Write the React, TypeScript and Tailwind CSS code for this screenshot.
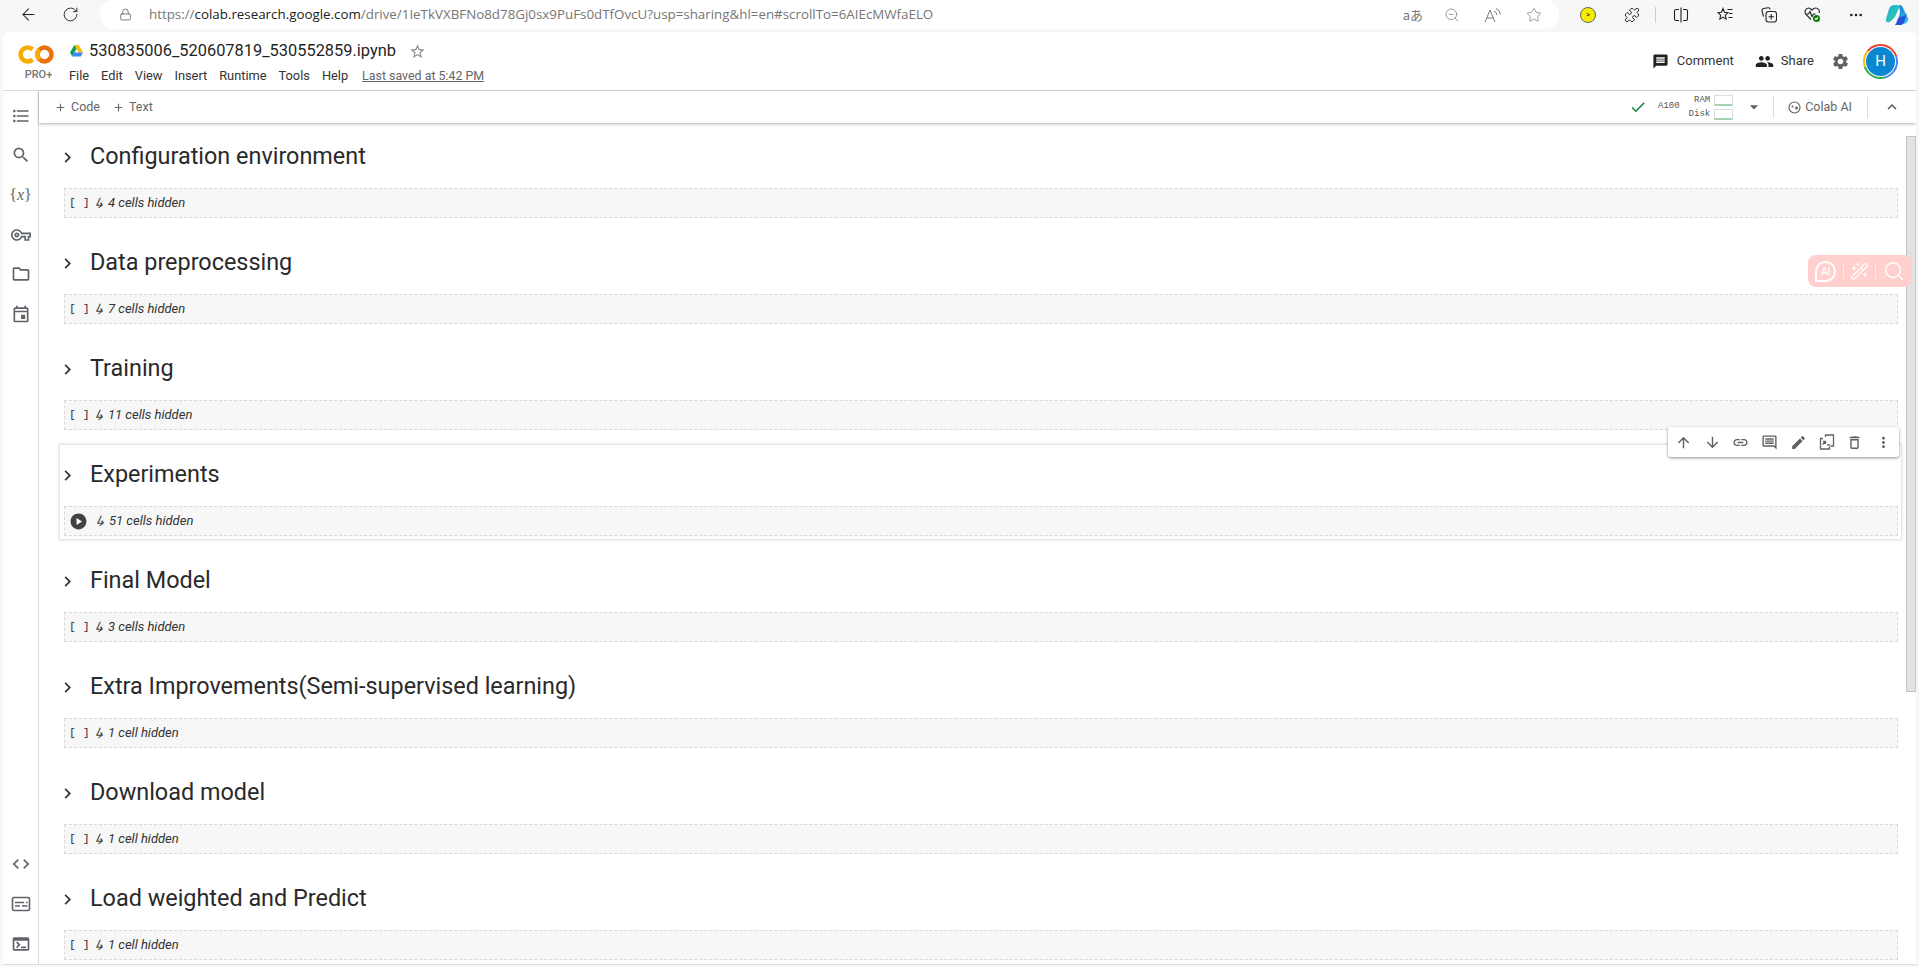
import React from 'react'
import {
  MdAdd, MdArrowDownward, MdArrowDropDown, MdArrowUpward, MdCheck, MdChevronRight, MdCode,
  MdEdit, MdExpandLess, MdFormatListBulleted, MdLink, MdMessage, MdMoreVert, MdOutlineComment, MdOutlineDelete,
  MdOutlineEvent, MdOutlineFolder, MdOutlineVpnKey, MdPeople, MdPlayCircle,
  MdSearch, MdSettings, MdStarBorder, MdOutlineTerminal,
} from 'react-icons/md'
import { ArrowLeft, Lock, Puzzle, RotateCw, Star, ZoomOut, MoreHorizontal, WandSparkles, Search } from 'lucide-react'

const sections = [
  { title: 'Configuration environment', hidden: '4 cells hidden' },
  { title: 'Data preprocessing', hidden: '7 cells hidden' },
  { title: 'Training', hidden: '11 cells hidden' },
  { title: 'Experiments', hidden: '51 cells hidden', active: true },
  { title: 'Final Model', hidden: '3 cells hidden' },
  { title: 'Extra Improvements(Semi-supervised learning)', hidden: '1 cell hidden' },
  { title: 'Download model', hidden: '1 cell hidden' },
  { title: 'Load weighted and Predict', hidden: '1 cell hidden' },
]

function BrowserBar() {
  return (
    <div className="h-[32px] flex bg-[#f7f7f7] shrink-0 text-[#222]">
      <div className="w-[100px] h-[29px] flex items-center pl-[19px] gap-[24px]">
        <ArrowLeft size={19} strokeWidth={1.3} />
        <RotateCw size={17} strokeWidth={1.3} />
      </div>
      <div className="w-[1459px] h-[29px] bg-white rounded-[14px] flex items-center pl-[19px]">
        <Lock size={13} strokeWidth={1.4} className="text-[#555]" />
        <div className="ml-[17px] text-[13.35px] whitespace-nowrap text-[#767676] font-['Open_Sans',sans-serif]">
          https://<span className="text-[#222]">colab.research.google.com</span>/drive/1IeTkVXBFNo8d78Gj0sx9PuFs0dTfOvcU?usp=sharing&hl=en#scrollTo=6AIEcMWfaELO
        </div>
        <div className="ml-auto flex items-center text-[#777]">
          <span className="text-[13px] font-['Noto_Sans_CJK_JP',sans-serif]">aあ</span>
          <ZoomOut size={16} strokeWidth={1.1} className="ml-[21px]" />
          <svg width="18" height="16" viewBox="0 0 18 16" fill="none" stroke="#777" strokeWidth="1" className="ml-[24px]">
            <path d="M1 15 L6 3 L11 15 M3 11 H9" />
            <path d="M10 4 Q12.5 5 13 8 M12 1.5 Q16 3 16.5 7.5" />
          </svg>
          <Star size={16} strokeWidth={1.1} className="ml-[24px] mr-[17px]" />
        </div>
      </div>
      <div className="flex items-center h-[29px]">
        <div className="ml-[21px] w-[16px] h-[16px] rounded-full bg-[#f5ee00] border border-[#666] flex items-center justify-center text-[8px] leading-none">&gt;</div>
        <Puzzle size={16} strokeWidth={1.4} className="ml-[28px]" />
        <div className="ml-[15px] w-px h-[16px] bg-[#ccc]" />
        <svg width="16" height="16" viewBox="0 0 16 16" fill="none" stroke="#222" strokeWidth="1.1" className="ml-[17px]">
          <path d="M6 2.5H3a1.5 1.5 0 0 0-1.5 1.5v8A1.5 1.5 0 0 0 3 13.5H6M10 2.5h3A1.5 1.5 0 0 1 14.5 4v8a1.5 1.5 0 0 1-1.5 1.5h-3M8 .5v15" />
        </svg>
        <svg width="16" height="16" viewBox="0 0 16 16" fill="none" stroke="#222" strokeWidth="1.1" className="ml-[28px]">
          <path d="M6 1.5l1.5 3.8 3.5.3-2.6 2.5.7 4-3.1-2-3.1 2 .7-4L1 5.6l3.5-.3z" />
          <path d="M10.5 2.5h5M12 6.5h3.5M11.5 10.5h4" />
        </svg>
        <svg width="16" height="16" viewBox="0 0 16 16" fill="none" stroke="#222" strokeWidth="1.1" className="ml-[28px]">
          <path d="M2.5 9.5L1 4a2 2 0 0 1 1.5-2.5L7 .8a2 2 0 0 1 2.2 1.7" />
          <rect x="5" y="4.5" width="10.5" height="10.5" rx="2.5" />
          <path d="M10.2 7v5.5M7.5 9.8h5.5" />
        </svg>
        <svg width="17" height="17" viewBox="0 0 17 17" fill="none" stroke="#222" strokeWidth="1.1" className="ml-[27px]">
          <path d="M7 13.5L2 8.5C0 6 1.5 2 4.5 2 6 2 7 3 8 4c1-1 2-2 3.5-2C14.5 2 16 5 15 7" />
          <path d="M1.5 8h3l1.5-2.5 2 5 1.5-2.5h2" />
          <circle cx="12.5" cy="12.5" r="3.5" fill="#107c10" stroke="none" />
          <path d="M11 12.5l1 1 2-2" stroke="#fff" />
        </svg>
        <MoreHorizontal size={16} strokeWidth={2} className="ml-[27px]" />
        <svg width="24" height="22" viewBox="0 0 24 22" className="ml-[21px]">
          <defs>
            <linearGradient id="cpa" x1="0" y1="0" x2="1" y2="1"><stop offset="0" stopColor="#1fa8e0" /><stop offset="1" stopColor="#33d39a" /></linearGradient>
            <linearGradient id="cpb" x1="0" y1="0" x2="1" y2="1"><stop offset="0" stopColor="#0e6fd8" /><stop offset="1" stopColor="#3cc8e8" /></linearGradient>
          </defs>
          <path d="M10 1 C6 1 4.5 3 3.5 7 L1 15 C0 19 4 19 6 17 L10 13 L14 4 C15 1 13 1 10 1Z" fill="url(#cpa)" />
          <path d="M14 1 C17 1 18 3 19 6 L23 14 C24 18 20 20 18 20 L10 21 C13 19 13 17 14 13 L15 8Z" fill="url(#cpb)" />
          <path d="M10 21 L15 21 C18 21 19 19 20 15 L22 9 C21 12 16 13 14 13 C12 15 12 19 10 21Z" fill="#2a52d8" />
        </svg>
      </div>
    </div>
  )
}

function ColabLogo() {
  return (
    <div className="w-[36px] ml-[15px] flex flex-col items-center shrink-0">
      <svg width="36" height="19" viewBox="0 0 36 19">
        <circle cx="26.5" cy="9.5" r="7" fill="none" stroke="#e8710a" strokeWidth="4.6" />
        <path d="M14.5 4.5 A7 7 0 1 0 14.5 14.5" fill="none" stroke="#f9ab00" strokeWidth="4.6" />
        <path d="M21.5 4.5 A7 7 0 0 0 21.5 14.5" fill="none" stroke="#f9ab00" strokeWidth="4.6" />
      </svg>
      <div className="text-[11px] leading-none mt-[5px] ml-[5px] text-[#757575] font-medium whitespace-nowrap">PRO+</div>
    </div>
  )
}

function DriveIcon() {
  return (
    <svg width="13" height="12" viewBox="0 0 13 12" className="shrink-0">
      <path d="M4.3 0h4.4l4.3 7.5H8.7z" fill="#fbbc04" />
      <path d="M4.3 0L0 7.5 2.2 11.5 6.5 3.8z" fill="#0f9d58" />
      <path d="M2.2 11.5h8.6L13 7.5H4.4z" fill="#4285f4" />
    </svg>
  )
}

function Header() {
  return (
    <div className="h-[59px] flex shrink-0 items-start border-b border-[#dadada]">
      <div className="mt-[13px]"><ColabLogo /></div>
      <div className="ml-[16px] mt-[8px]">
        <div className="flex items-center gap-[6px] h-[22px]">
          <DriveIcon />
          <span className="text-[16.4px] text-[#1f1f1f]">530835006_520607819_530552859.ipynb</span>
          <MdStarBorder size={17} className="ml-[7px] text-[#8a8a8a]" />
        </div>
        <div className="flex items-center mt-[4px] -ml-[1px] text-[12.8px] text-[#333] gap-[12px] leading-[20px]">
          <span>File</span><span>Edit</span><span>View</span><span>Insert</span><span>Runtime</span><span>Tools</span><span>Help</span>
          <span className="ml-[2px] text-[12.4px] text-[#666] underline">Last saved at 5:42 PM</span>
        </div>
      </div>
      <div className="ml-auto flex items-center h-[58px] pr-[18px] text-[13px] text-[#333]">
        <MdMessage size={17} className="text-[#222]" />
        <span className="ml-[8px]">Comment</span>
        <MdPeople size={19} className="ml-[21px] text-[#222]" />
        <span className="ml-[7px]">Share</span>
        <MdSettings size={19} className="ml-[17px] text-[#5f6368]" />
        <div className="ml-[13px] w-[35px] h-[35px] rounded-full p-[2px] bg-[conic-gradient(#ea4335_0deg,#ea4335_70deg,#4285f4_70deg,#4285f4_160deg,#34a853_160deg,#34a853_250deg,#fbbc04_250deg,#fbbc04_310deg,#ea4335_310deg)]">
          <div className="w-full h-full rounded-full bg-white p-[1px]">
            <div className="w-full h-full rounded-full bg-[#0b87d1] text-white text-[15px] flex items-center justify-center">H</div>
          </div>
        </div>
      </div>
    </div>
  )
}

function Toolbar() {
  return (
    <div className="h-[32px] shrink-0 flex items-center bg-white shadow-[0_1px_3px_rgba(0,0,0,0.3)] z-10 text-[12.5px] text-[#666]">
      <MdAdd size={13} className="ml-[15px]" />
      <span className="ml-[4px]">Code</span>
      <MdAdd size={13} className="ml-[12px]" />
      <span className="ml-[4px]">Text</span>
      <div className="ml-auto flex items-center">
        <MdCheck size={18} className="text-[#188038]" />
        <div className="ml-[11px] text-[9px] font-['Liberation_Mono',monospace] text-[#555]">A100</div>
        <div className="ml-[9px] flex flex-col gap-[3px] font-['Liberation_Mono',monospace] text-[9px] leading-[10px] text-[#555]">
          <div className="flex justify-end items-center gap-[4px]">RAM<div className="w-[19px] h-[11px] border border-[#ddd] border-b-2 border-b-[#a5d3b1]" /></div>
          <div className="flex justify-end items-center gap-[4px]">Disk<div className="w-[19px] h-[11px] border border-[#ddd] border-b-2 border-b-[#a5d3b1]" /></div>
        </div>
        <MdArrowDropDown size={20} className="ml-[11px] text-[#5f6368]" />
        <div className="ml-[9px] w-px h-[21px] bg-[#dadada]" />
        <svg width="13" height="13" viewBox="0 0 13 13" className="ml-[14px]">
          <circle cx="6.5" cy="6.5" r="5.5" fill="none" stroke="#666" strokeWidth="1.2" />
          <circle cx="4.5" cy="5.5" r="1" fill="#666" />
          <circle cx="8.5" cy="7" r="1.5" fill="#666" />
        </svg>
        <span className="ml-[4px]">Colab AI</span>
        <div className="ml-[15px] w-px h-[21px] bg-[#dadada]" />
        <MdExpandLess size={18} className="ml-[15px] mr-[15px] text-[#555]" />
      </div>
    </div>
  )
}

function Sidebar() {
  const iconClass = 'text-[#5f6368]'
  const row = 'h-[39.6px] flex items-center'
  return (
    <div className="w-[36px] shrink-0 border-r border-[#dadada] flex flex-col items-center pt-[5px]">
      <div className={row}><MdFormatListBulleted size={20} className={iconClass} /></div>
      <div className={row}><MdSearch size={20} className={iconClass} /></div>
      <div className={`${row} text-[16px] text-[#5f6368] font-['Liberation_Serif',serif]`}>
        {'{'}<i>x</i>{'}'}
      </div>
      <div className={row}><MdOutlineVpnKey size={20} className={iconClass} /></div>
      <div className={row}><MdOutlineFolder size={20} className={iconClass} /></div>
      <div className={row}><MdOutlineEvent size={20} className={iconClass} /></div>
      <div className="mt-auto h-10 flex items-center"><MdCode size={20} className={iconClass} /></div>
      <div className="h-10 flex items-center">
        <svg width="20" height="20" viewBox="0 0 20 20" fill="none" stroke="#5f6368">
          <rect x="1.5" y="3.5" width="17" height="13" rx="1.5" strokeWidth="1.6" />
          <path d="M4 8.5h9M15 8.5h1.5M4 12h5M11 12h5.5" strokeWidth="1.5" />
        </svg>
      </div>
      <div className="h-10 flex items-center"><MdOutlineTerminal size={20} className={iconClass} /></div>
    </div>
  )
}

function MoveIcon() {
  return (
    <svg width="16" height="16" viewBox="0 0 16 16" fill="none" stroke="#616161" strokeWidth="1.3">
      <path d="M6.5 3V1h8v11h-3" />
      <path d="M4 4.5H1.5V15h9v-2.5" />
      <path d="M3.5 10.5l3-3M4 7.5h2.5V10" />
      <path d="M8 11h3" />
    </svg>
  )
}

function CellToolbar() {
  const icons = [MdArrowUpward, MdArrowDownward, MdLink, MdOutlineComment, MdEdit, MoveIcon, MdOutlineDelete, MdMoreVert]
  return (
    <div className="absolute right-[2px] top-[-18px] w-[231px] h-[30px] bg-white rounded-[3px] shadow-[0_1px_3px_rgba(0,0,0,0.45)] flex items-center justify-around px-[1px] z-10">
      {icons.map((Icon, i) => <Icon key={i} size={17} className="text-[#616161]" />)}
    </div>
  )
}

function Section({ title, hidden, active }: { title: string; hidden: string; active?: boolean }) {
  return (
    <div className={`relative h-[96px] mb-[10px] ml-[20px] mr-[4px] pl-[4px] pr-[3px] border ${active ? 'border-[#e6e6e6] shadow-[0_0_3px_rgba(0,0,0,0.12)]' : 'border-transparent'}`}>
      {active && <CellToolbar />}
      <div className="h-[60px] flex items-center">
        <MdChevronRight size={21} className="text-[#333] -ml-[7px]" />
        <h2 className="ml-[12px] text-[23.4px] font-normal text-[#2a2a2a] leading-none">{title}</h2>
      </div>
      <div className="h-[30px] mt-[1px] bg-[#f7f7f7] border border-dashed border-[#d9d9d9] flex items-center">
        {active
          ? <MdPlayCircle size={19} className="ml-[4px] mr-[6px] text-[#424242]" />
          : <span className="ml-[4px] mr-[6px] w-[18px] text-[11.5px] font-['Liberation_Mono',monospace] text-[#333] whitespace-pre">[ ]</span>}
        <div className="flex items-center gap-[3px] -mt-[1px] text-[13px] italic text-[#333]">
          <span className="-skew-x-12 text-[14px] leading-none text-[#444]">↳</span>
          <span>{hidden}</span>
        </div>
      </div>
    </div>
  )
}

export default function App() {
  return (
    <div className="h-[967px] w-full overflow-hidden bg-[#f7f7f7] flex flex-col font-['Roboto',sans-serif] relative">
      <BrowserBar />
      <div className="flex-1 min-h-0 mx-[3px] mb-[2px] bg-white rounded-t-[6px] border-b border-[#dadada] flex flex-col overflow-hidden">
        <Header />
        <div className="flex-1 min-h-0 flex">
          <Sidebar />
          <div className="flex-1 min-w-0 flex flex-col">
            <Toolbar />
            <div className="flex-1 min-h-0 flex overflow-hidden">
              <div className="flex-1 min-w-0 pt-[3px]">
                {sections.map(s => <Section key={s.title} {...s} />)}
              </div>
              <div className="w-[10px] shrink-0 pt-[13px]">
                <div className="h-[556px] bg-[#e2e2e2] border border-[#c4c4c4]" />
              </div>
            </div>
          </div>
        </div>
      </div>
      <div className="absolute left-[1808px] top-[255px] w-[104px] h-[32px] rounded-[8px] bg-[#ffd0ce] flex items-center justify-around px-[4px] text-white">
        <div className="w-[21px] h-[21px] rounded-full rounded-bl-[3px] border-2 border-white text-[10px] font-medium flex items-center justify-center">AI</div>
        <div className="w-px h-[16px] bg-white/60" />
        <WandSparkles size={19} strokeWidth={1.6} />
        <div className="w-px h-[16px] bg-white/60" />
        <Search size={22} strokeWidth={1.6} />
      </div>
    </div>
  )
}
